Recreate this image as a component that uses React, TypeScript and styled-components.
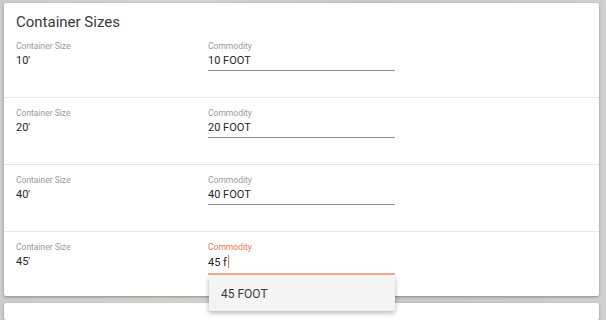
import styled, { createGlobalStyle } from "styled-components";

interface SizeRow {
  size: string;
  commodity: string;
}

const rows: SizeRow[] = [
  { size: "10'", commodity: "10 FOOT" },
  { size: "20'", commodity: "20 FOOT" },
  { size: "40'", commodity: "40 FOOT" },
];

const GlobalStyle = createGlobalStyle`
  html, body {
    margin: 0;
    height: 320px;
    overflow: hidden;
  }
  body {
    padding: 3px 7px 0 4px;
    box-sizing: border-box;
    font-family: Roboto, "Liberation Sans", Arial, sans-serif;
    background: linear-gradient(90deg, #cfcdcb 0%, #d6d3d0 30%, #cbc9c7 60%, #d2d0ce 100%);
  }
`;

const Card = styled.div`
  background: #ffffff;
  border-radius: 2px;
  box-shadow: 0 1px 3px rgba(0, 0, 0, 0.35);
  margin-bottom: 7px;
`;

const Header = styled.div`
  height: 28px;
  box-sizing: border-box;
  padding: 9px 12px 0;
  font-size: 15px;
  line-height: 20px;
  color: #3a3a3a;
`;

const Row = styled.div<{ $last?: boolean }>`
  display: grid;
  grid-template-columns: 192px 187px;
  height: ${({ $last }) => ($last ? "64px" : "67px")};
  box-sizing: border-box;
  padding: 9px 12px 0;
  border-bottom: ${({ $last }) => ($last ? "none" : "1px solid #e6e6e6")};
`;

const Field = styled.div`
  position: relative;
  display: flex;
  flex-direction: column;
`;

const Label = styled.div<{ $focused?: boolean }>`
  font-size: 8.5px;
  line-height: 12px;
  color: ${({ $focused }) => ($focused ? "#f0764c" : "#9a9a9a")};
`;

const Value = styled.div`
  margin-top: 2px;
  font-size: 11px;
  line-height: 14px;
  color: #262626;
`;

const Input = styled.div<{ $focused?: boolean }>`
  margin-top: 2px;
  padding-bottom: ${({ $focused }) => ($focused ? "3px" : "2px")};
  font-size: 11px;
  line-height: 14px;
  color: #262626;
  border-bottom: ${({ $focused }) =>
    $focused ? "2px solid #f6a88d" : "1px solid #8f8f8f"};
`;

const Caret = styled.span`
  display: inline-block;
  width: 1px;
  height: 13px;
  margin-left: 1px;
  vertical-align: -2px;
  background: #f0764c;
`;

const Menu = styled.div`
  position: absolute;
  top: 35px;
  left: 1px;
  right: 0;
  height: 35px;
  background: #f4f4f4;
  border-radius: 2px;
  box-shadow: 0 2px 5px rgba(0, 0, 0, 0.3);
  display: flex;
  align-items: center;
  padding-left: 12px;
  font-size: 12px;
  color: #3a3a3a;
  z-index: 2;
`;

const NextCard = styled.div`
  background: #ffffff;
  border-radius: 2px;
  box-shadow: 0 1px 3px rgba(0, 0, 0, 0.35);
  height: 17px;
`;

export default function App() {
  return (
    <>
      <GlobalStyle />
      <Card>
        <Header>Container Sizes</Header>
        {rows.map((r) => (
          <Row key={r.size}>
            <Field>
              <Label>Container Size</Label>
              <Value>{r.size}</Value>
            </Field>
            <Field>
              <Label>Commodity</Label>
              <Input>{r.commodity}</Input>
            </Field>
          </Row>
        ))}
        <Row $last>
          <Field>
            <Label>Container Size</Label>
            <Value>45'</Value>
          </Field>
          <Field>
            <Label $focused>Commodity</Label>
            <Input $focused>
              45 f<Caret />
            </Input>
            <Menu>45 FOOT</Menu>
          </Field>
        </Row>
      </Card>
      <NextCard />
    </>
  );
}
